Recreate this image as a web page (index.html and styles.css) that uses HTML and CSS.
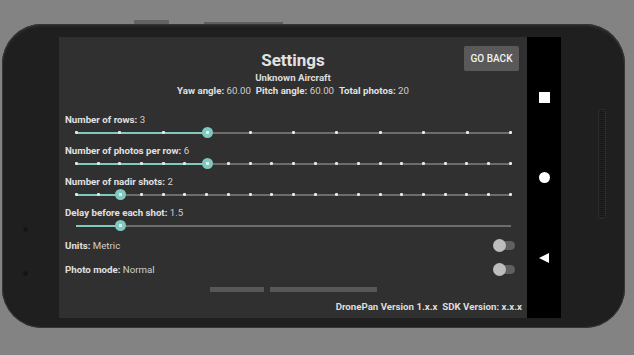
FILE: index.html
```html
<!DOCTYPE html>
<html lang="en">
<head>
    <meta charset="UTF-8">
    <meta name="viewport" content="width=device-width, initial-scale=1.0">
    <title>DronePan Settings</title>
    <link rel="stylesheet" href="styles.css">
</head>
<body>
<div class="side-buttons">
    <span class="power"></span>
    <span class="volume"></span>
</div>
<div class="phone">
    <div class="bezel-left">
        <span class="sensor"></span>
        <span class="camera"></span>
    </div>

    <div class="screen">
        <div class="header">
            <div class="title">Settings</div>
            <div class="aircraft">Unknown Aircraft</div>
            <div class="info">
                <b>Yaw angle:</b> 60.00&nbsp; <b>Pitch angle:</b> 60.00&nbsp; <b>Total photos:</b> 20
            </div>
            <button class="go-back">GO BACK</button>
        </div>

        <div class="settings">
            <div class="setting">
                <div class="label"><b>Number of rows:</b> 3</div>
                <div class="slider">
                    <div class="track"></div>
                    <div class="fill" style="width:30%"></div>
                    <div class="ticks"><i></i><i></i><i></i><i></i><i></i><i></i><i></i><i></i><i></i><i></i><i></i></div>
                    <div class="thumb" style="left:30%"></div>
                </div>
            </div>
            <div class="setting">
                <div class="label"><b>Number of photos per row:</b> 6</div>
                <div class="slider">
                    <div class="track"></div>
                    <div class="fill" style="width:30%"></div>
                    <div class="ticks"><i></i><i></i><i></i><i></i><i></i><i></i><i></i><i></i><i></i><i></i><i></i><i></i><i></i><i></i><i></i><i></i><i></i><i></i><i></i><i></i><i></i></div>
                    <div class="thumb" style="left:30%"></div>
                </div>
            </div>
            <div class="setting">
                <div class="label"><b>Number of nadir shots:</b> 2</div>
                <div class="slider">
                    <div class="track"></div>
                    <div class="fill" style="width:10%"></div>
                    <div class="ticks"><i></i><i></i><i></i><i></i><i></i><i></i><i></i><i></i><i></i><i></i><i></i><i></i><i></i><i></i><i></i><i></i><i></i><i></i><i></i><i></i><i></i></div>
                    <div class="thumb" style="left:10%"></div>
                </div>
            </div>
            <div class="setting">
                <div class="label"><b>Delay before each shot:</b> 1.5</div>
                <div class="slider">
                    <div class="track"></div>
                    <div class="fill" style="width:10%"></div>
                    <div class="thumb" style="left:10%"></div>
                </div>
            </div>

            <div class="option">
                <span><b>Units:</b> Metric</span>
                <span class="switch"></span>
            </div>
            <div class="option">
                <span><b>Photo mode:</b> Normal</span>
                <span class="switch"></span>
            </div>
        </div>

        <div class="scroll-bits">
            <span class="bit-a"></span>
            <span class="bit-b"></span>
        </div>

        <div class="footer">DronePan Version 1.x.x&nbsp; SDK Version: x.x.x</div>
    </div>

    <div class="navbar">
        <span class="nav-square"></span>
        <span class="nav-circle"></span>
        <span class="nav-back"></span>
    </div>

    <div class="bezel-right">
        <span class="grille"></span>
    </div>
</div>
</body>
</html>
```

FILE: styles.css
```css
body {
    margin: 0;
    width: 634px;
    height: 355px;
    overflow: hidden;
    background: #838383;
    font-family: Roboto, "Liberation Sans", sans-serif;
}
.side-buttons {
    height: 24px;
    display: flex;
    align-items: flex-end;
}
.power {
    width: 35px;
    height: 4px;
    margin-left: 134px;
    background: #626262;
    border-radius: 1px 1px 0 0;
}
.volume {
    width: 79px;
    height: 2px;
    margin-left: 35px;
    background: #5e5e5e;
}
.phone {
    margin-left: 2px;
    width: 623px;
    height: 304px;
    box-sizing: border-box;
    padding: 13px 0 10px;
    display: flex;
    background: #1f1f1f;
    border-radius: 40px;
    box-shadow: inset 0 0 0 1px #353535, inset 0 2px 3px #2e2e2e;
}
.bezel-left {
    width: 57px;
    position: relative;
}
.sensor, .camera {
    position: absolute;
    left: 21px;
    width: 5px;
    height: 5px;
    border-radius: 50%;
    background: #141414;
    box-shadow: 0 0 1px #333;
}
.sensor { top: 190px; }
.camera { top: 234px; }
.screen {
    width: 468px;
    background: #303030;
    color: #dcdcdc;
    display: flex;
    flex-direction: column;
}
.header {
    position: relative;
    padding-top: 12px;
    text-align: center;
}
.title {
    font-size: 17px;
    font-weight: bold;
    line-height: 22px;
    color: #e2e2e2;
}
.aircraft {
    font-size: 9.7px;
    font-weight: bold;
    line-height: 13px;
}
.info {
    font-size: 9.7px;
    line-height: 14px;
    color: #cfcfcf;
}
.info b, .label b, .option b {
    color: #e0e0e0;
}
.go-back {
    position: absolute;
    top: 9px;
    right: 8px;
    width: 55px;
    height: 25px;
    border: 0;
    border-radius: 2px;
    background: #595959;
    color: #f2f2f2;
    font-family: inherit;
    font-size: 10px;
    font-weight: 500;
    padding: 0;
}
.settings {
    margin-top: 16px;
    padding-left: 6px;
}
.setting {
    margin-bottom: 5px;
}
.label {
    font-size: 9.7px;
    line-height: 12px;
    color: #cfcfcf;
}
.slider {
    position: relative;
    margin-left: 11px;
    width: 435px;
    height: 14px;
}
.track, .fill {
    position: absolute;
    left: 0;
    top: 6px;
    height: 2px;
}
.track {
    width: 100%;
    background: #6c6c6c;
}
.fill {
    background: #7fc9be;
}
.ticks {
    position: absolute;
    left: -1px;
    right: -1px;
    top: 5px;
    display: flex;
    justify-content: space-between;
}
.ticks i {
    width: 3px;
    height: 3px;
    background: #e6e6e6;
    border-radius: 1px;
}
.thumb {
    position: absolute;
    top: 1px;
    width: 11px;
    height: 11px;
    margin-left: -5px;
    border-radius: 50%;
    background: radial-gradient(circle, #d6efec 0 1.5px, #7fc9be 2px);
}
.option {
    display: flex;
    justify-content: space-between;
    align-items: center;
    height: 14px;
    margin-top: 5px;
    padding-right: 12px;
    font-size: 9.7px;
    color: #cfcfcf;
}
.option + .option {
    margin-top: 10px;
}
.switch {
    position: relative;
    width: 22px;
    height: 9px;
    border-radius: 5px;
    background: linear-gradient(to right, transparent 6px, #606060 6px);
}
.switch::before {
    content: "";
    position: absolute;
    left: 0;
    top: -2px;
    width: 13px;
    height: 13px;
    border-radius: 50%;
    background: #bdbdbd;
}
.scroll-bits {
    display: flex;
    gap: 6px;
    margin-top: 11px;
    padding-left: 151px;
}
.scroll-bits span {
    height: 5px;
    background: #575757;
}
.bit-a { width: 54px; }
.bit-b { width: 107px; }
.footer {
    margin-top: 9px;
    padding-right: 5px;
    text-align: right;
    font-size: 9.7px;
    font-weight: bold;
    line-height: 12px;
    color: #dedede;
}
.navbar {
    width: 34px;
    background: #000;
    display: flex;
    flex-direction: column;
    align-items: center;
    justify-content: center;
    gap: 69px;
}
.nav-square {
    width: 11px;
    height: 11px;
    background: #fff;
}
.nav-circle {
    width: 11px;
    height: 11px;
    border-radius: 50%;
    background: #fff;
}
.nav-back {
    width: 0;
    height: 0;
    border-top: 5px solid transparent;
    border-bottom: 5px solid transparent;
    border-right: 10px solid #fff;
    margin: 0.5px 0;
}
.bezel-right {
    flex: 1;
    position: relative;
}
.grille {
    position: absolute;
    left: 37px;
    top: 72px;
    width: 6px;
    height: 108px;
    border-radius: 3px;
    border: 1px solid #2c2c2c;
    background: repeating-linear-gradient(#161616 0 1px, #232323 1px 2px);
}
```
